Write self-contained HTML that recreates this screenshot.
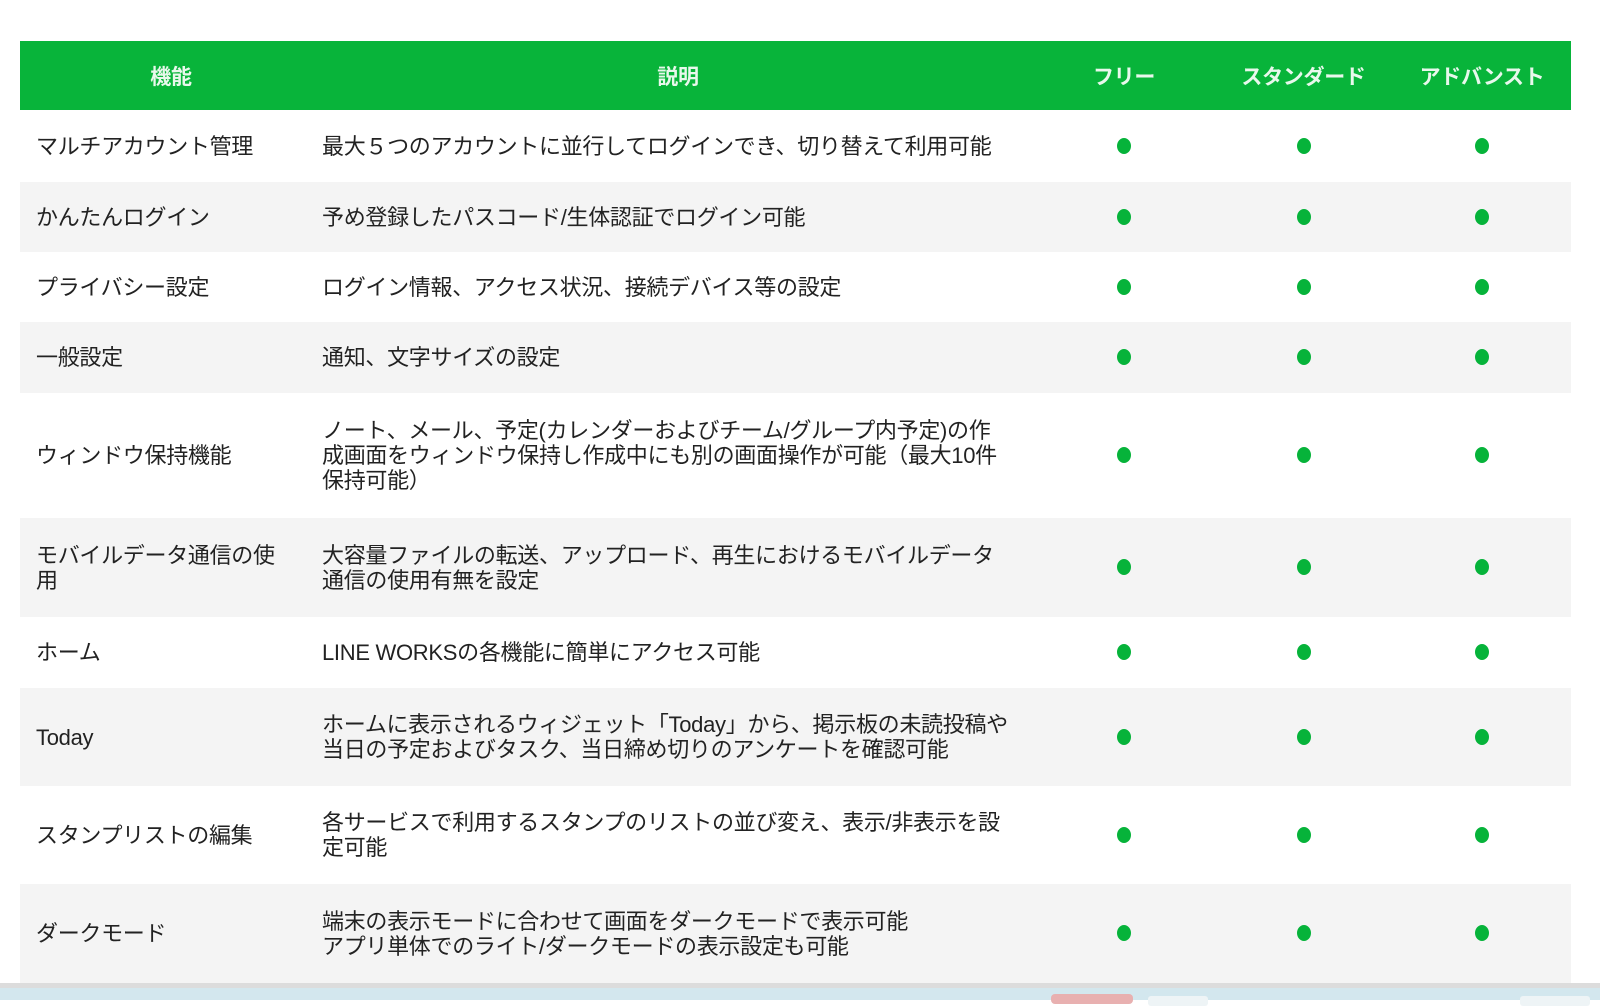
<!DOCTYPE html>
<html><head><meta charset="utf-8"><style>
body{margin:0;width:1600px;height:1000px;background:#fff;overflow:hidden;font-family:"Liberation Sans","Noto Sans CJK JP",sans-serif;color:#222;position:relative}
table{position:absolute;left:20px;top:41px;width:1551px;border-collapse:collapse;font-size:22px;letter-spacing:-0.3px;table-layout:fixed}
th{background:#08b43a;color:#e8f8ec;font-weight:bold;height:69px;font-size:21px;padding:0}
td{vertical-align:middle;line-height:25px;white-space:nowrap;padding:0}
td.a{padding-left:16px}
td.d{text-align:center}
.dot{display:inline-block;width:14px;height:16px;border-radius:50%;background:#06b33a}
tr:nth-child(odd) td{background:#f4f4f4}
.bot{position:absolute;left:0;top:983px;width:1600px;height:6px;background:#dcdcdc}
.strip{position:absolute;left:0;top:988px;width:1600px;height:12px;background:#d3e7ee}
.pk{position:absolute;left:1051px;top:994px;width:82px;height:10px;background:#e8b0b0;border-radius:4px}
.wh{position:absolute;left:1148px;top:996px;width:60px;height:10px;background:#eef4f6;border-radius:3px}
.wh2{position:absolute;left:1520px;top:996px;width:70px;height:10px;background:#eef4f6;border-radius:3px}
</style></head><body>
<table>
<colgroup><col style="width:302px"><col style="width:712px"><col style="width:180px"><col style="width:179px"><col style="width:178px"></colgroup>
<tr><th>機能</th><th>説明</th><th>フリー</th><th>スタンダード</th><th>アドバンスト</th></tr>
<tr style="height:72px"><td class="a">マルチアカウント管理</td><td class="b">最大５つのアカウントに並行してログインでき、切り替えて利用可能</td><td class="d"><span class="dot"></span></td><td class="d"><span class="dot"></span></td><td class="d"><span class="dot"></span></td></tr>
<tr style="height:70px"><td class="a">かんたんログイン</td><td class="b">予め登録したパスコード/生体認証でログイン可能</td><td class="d"><span class="dot"></span></td><td class="d"><span class="dot"></span></td><td class="d"><span class="dot"></span></td></tr>
<tr style="height:70px"><td class="a">プライバシー設定</td><td class="b">ログイン情報、アクセス状況、接続デバイス等の設定</td><td class="d"><span class="dot"></span></td><td class="d"><span class="dot"></span></td><td class="d"><span class="dot"></span></td></tr>
<tr style="height:71px"><td class="a">一般設定</td><td class="b">通知、文字サイズの設定</td><td class="d"><span class="dot"></span></td><td class="d"><span class="dot"></span></td><td class="d"><span class="dot"></span></td></tr>
<tr style="height:125px"><td class="a">ウィンドウ保持機能</td><td class="b">ノート、メール、予定(カレンダーおよびチーム/グループ内予定)の作<br>成画面をウィンドウ保持し作成中にも別の画面操作が可能（最大10件<br>保持可能）</td><td class="d"><span class="dot"></span></td><td class="d"><span class="dot"></span></td><td class="d"><span class="dot"></span></td></tr>
<tr style="height:99px"><td class="a">モバイルデータ通信の使<br>用</td><td class="b">大容量ファイルの転送、アップロード、再生におけるモバイルデータ<br>通信の使用有無を設定</td><td class="d"><span class="dot"></span></td><td class="d"><span class="dot"></span></td><td class="d"><span class="dot"></span></td></tr>
<tr style="height:71px"><td class="a">ホーム</td><td class="b">LINE WORKSの各機能に簡単にアクセス可能</td><td class="d"><span class="dot"></span></td><td class="d"><span class="dot"></span></td><td class="d"><span class="dot"></span></td></tr>
<tr style="height:98px"><td class="a">Today</td><td class="b">ホームに表示されるウィジェット「Today」から、掲示板の未読投稿や<br>当日の予定およびタスク、当日締め切りのアンケートを確認可能</td><td class="d"><span class="dot"></span></td><td class="d"><span class="dot"></span></td><td class="d"><span class="dot"></span></td></tr>
<tr style="height:98px"><td class="a">スタンプリストの編集</td><td class="b">各サービスで利用するスタンプのリストの並び変え、表示/非表示を設<br>定可能</td><td class="d"><span class="dot"></span></td><td class="d"><span class="dot"></span></td><td class="d"><span class="dot"></span></td></tr>
<tr style="height:99px"><td class="a">ダークモード</td><td class="b">端末の表示モードに合わせて画面をダークモードで表示可能<br>アプリ単体でのライト/ダークモードの表示設定も可能</td><td class="d"><span class="dot"></span></td><td class="d"><span class="dot"></span></td><td class="d"><span class="dot"></span></td></tr>
</table>
<div class="bot"></div><div class="strip"></div><div class="pk"></div><div class="wh"></div><div class="wh2"></div>
</body></html>
